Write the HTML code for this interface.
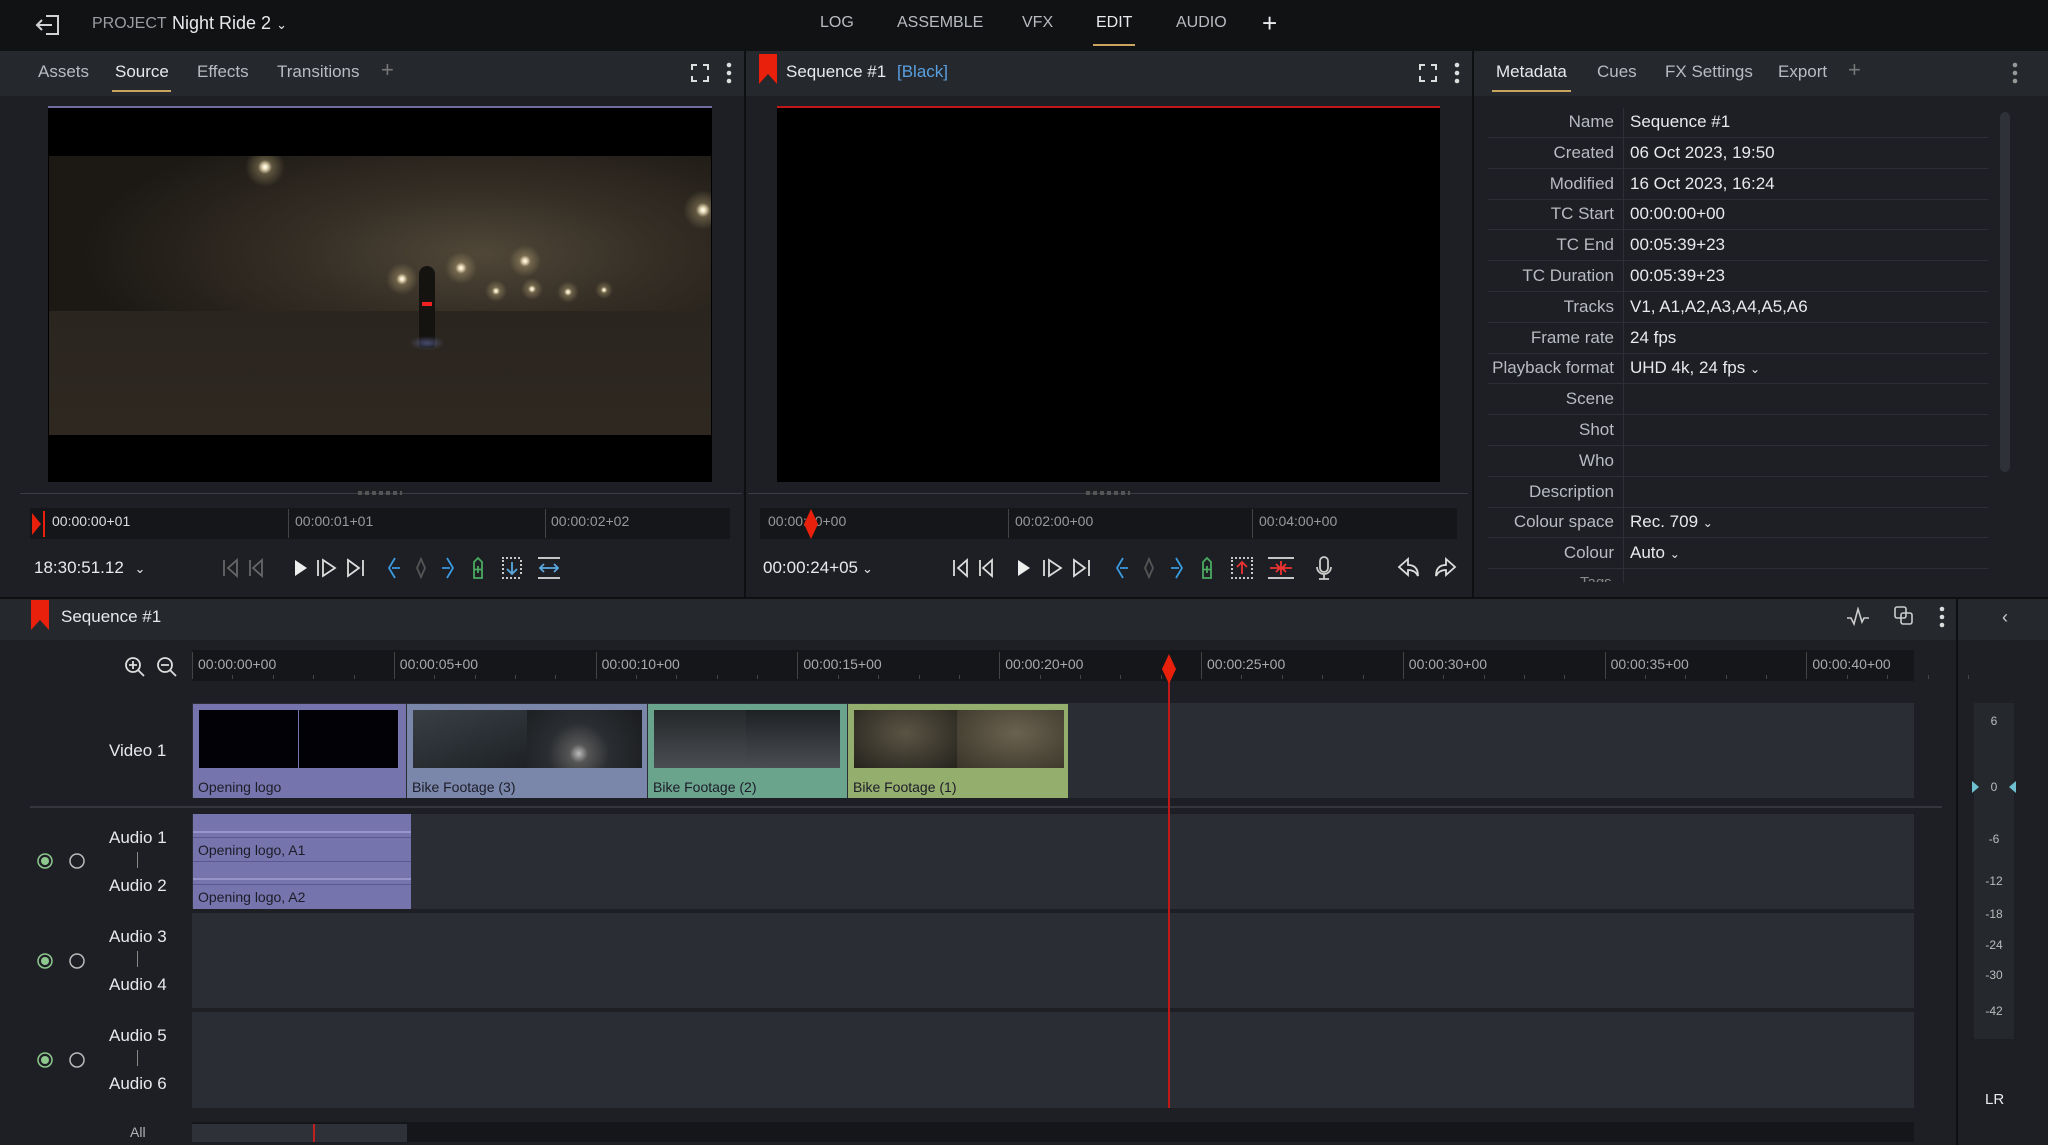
<!DOCTYPE html>
<html><head><meta charset="utf-8"><style>
*{box-sizing:border-box;margin:0;padding:0}
body{width:2048px;height:1145px;background:#1d1f24;font-family:"Liberation Sans",sans-serif;color:#c8cacf;position:relative;overflow:hidden;font-size:17px}
.a{position:absolute;white-space:nowrap}
.t{color:#b8bbc1}
.w{color:#e8e9ec}
.lbl{font-size:15px;color:#b0b3b8}
.ic{position:absolute}
.lt{position:absolute;border-radius:50%;background:radial-gradient(circle,#fff 0,#f0e4c0 8%,rgba(200,180,130,.35) 25%,rgba(120,105,80,0) 70%)}
</style></head><body>
<!-- top bar -->
<div class="a" style="left:0;top:0;width:2048px;height:51px;background:#111214"></div>
<svg class="ic" style="left:34px;top:14px" width="28" height="22" viewBox="0 0 28 22" fill="none" stroke="#d0d2d6" stroke-width="2"><path d="M12 2h12v18H12M18 11H3M8 6l-5 5 5 5"/></svg>
<div class="a t" style="left:92px;top:15px;font-size:16px;color:#9a9da3">PROJECT</div>
<div class="a w" style="left:172px;top:13px;font-size:18px">Night Ride 2 <span style="font-size:13px">&#8964;</span></div>
<div class="a t" style="left:820px;top:14px;font-size:16px">LOG</div>
<div class="a t" style="left:897px;top:14px;font-size:16px">ASSEMBLE</div>
<div class="a t" style="left:1022px;top:14px;font-size:16px">VFX</div>
<div class="a w" style="left:1096px;top:14px;font-size:16px">EDIT</div>
<div class="a" style="left:1093px;top:44px;width:42px;height:2px;background:#c9a560"></div>
<div class="a t" style="left:1176px;top:14px;font-size:16px">AUDIO</div>
<div class="a w" style="left:1262px;top:8px;font-size:26px;font-weight:300">+</div>

<!-- tab rows -->
<div class="a" style="left:0;top:51px;width:2048px;height:45px;background:#25282d"></div>
<div class="a" style="left:744px;top:51px;width:2px;height:546px;background:#0e0f11"></div>
<div class="a" style="left:1472px;top:51px;width:2px;height:546px;background:#0e0f11"></div>
<div class="a t" style="left:38px;top:62px">Assets</div>
<div class="a w" style="left:115px;top:62px">Source</div>
<div class="a" style="left:112px;top:90px;width:59px;height:2px;background:#c9a560"></div>
<div class="a t" style="left:197px;top:62px">Effects</div>
<div class="a t" style="left:277px;top:62px">Transitions</div>
<div class="a" style="left:381px;top:57px;font-size:22px;color:#777">+</div>
<svg class="ic" style="left:691px;top:64px" width="18" height="18" fill="none" stroke="#ddd" stroke-width="2"><path d="M1 6V1h5M12 1h5v5M17 12v5h-5M6 17H1v-5"/></svg>
<svg class="ic" style="left:725px;top:62px" width="8" height="22" fill="#ddd"><circle cx="4" cy="3" r="2.3"/><circle cx="4" cy="11" r="2.3"/><circle cx="4" cy="19" r="2.3"/></svg>
<svg class="ic" style="left:759px;top:54px" width="18" height="30"><path d="M0 0h18v30l-9-10-9 10z" fill="#e8200c"/></svg>
<div class="a w" style="left:786px;top:62px">Sequence #1</div>
<div class="a" style="left:897px;top:62px;color:#5aa0e0">[Black]</div>
<svg class="ic" style="left:1419px;top:64px" width="18" height="18" fill="none" stroke="#ddd" stroke-width="2"><path d="M1 6V1h5M12 1h5v5M17 12v5h-5M6 17H1v-5"/></svg>
<svg class="ic" style="left:1453px;top:62px" width="8" height="22" fill="#ddd"><circle cx="4" cy="3" r="2.3"/><circle cx="4" cy="11" r="2.3"/><circle cx="4" cy="19" r="2.3"/></svg>
<div class="a w" style="left:1496px;top:62px">Metadata</div>
<div class="a" style="left:1492px;top:90px;width:79px;height:2px;background:#c9a560"></div>
<div class="a t" style="left:1597px;top:62px">Cues</div>
<div class="a t" style="left:1665px;top:62px">FX Settings</div>
<div class="a t" style="left:1778px;top:62px">Export</div>
<div class="a" style="left:1848px;top:57px;font-size:22px;color:#777">+</div>
<svg class="ic" style="left:2011px;top:62px" width="8" height="22" fill="#999"><circle cx="4" cy="3" r="2.3"/><circle cx="4" cy="11" r="2.3"/><circle cx="4" cy="19" r="2.3"/></svg>

<!-- source viewer -->
<div class="a" style="left:48px;top:106px;width:664px;height:376px;background:#000;border-top:2px solid #6e6c9c"></div>
<div class="a" style="left:49px;top:156px;width:662px;height:279px;overflow:hidden;background:radial-gradient(ellipse 60% 50% at 65% 35%,#504738 0%,#352e25 45%,#1c1914 100%)">
 <div class="a" style="left:0;top:155px;width:662px;height:124px;background:linear-gradient(#2a251f,#2e2820)"></div>
 <div class="lt" style="left:196px;top:-9px;width:40px;height:40px"></div>
 <div class="lt" style="left:634px;top:34px;width:40px;height:40px"></div>
 <div class="lt" style="left:337px;top:107px;width:32px;height:32px"></div>
 <div class="lt" style="left:396px;top:96px;width:32px;height:32px"></div>
 <div class="lt" style="left:460px;top:89px;width:32px;height:32px"></div>
 <div class="lt" style="left:436px;top:124px;width:22px;height:22px"></div>
 <div class="lt" style="left:472px;top:122px;width:22px;height:22px"></div>
 <div class="lt" style="left:508px;top:125px;width:22px;height:22px"></div>
 <div class="lt" style="left:546px;top:125px;width:18px;height:18px"></div>
 <div class="a" style="left:370px;top:110px;width:16px;height:82px;border-radius:8px 8px 3px 3px;background:#151310"></div>
 <div class="a" style="left:373px;top:146px;width:10px;height:4px;background:#e22"></div>
 <div class="a" style="left:360px;top:180px;width:36px;height:14px;border-radius:50%;background:radial-gradient(rgba(120,130,200,.5),transparent 70%)"></div>
</div>
<!-- program viewer -->
<div class="a" style="left:777px;top:106px;width:663px;height:376px;background:#000;border-top:2px solid #c01818"></div>

<!-- dividers -->
<div class="a" style="left:20px;top:493px;width:722px;height:1px;background:#3a3d43"></div>
<div class="a" style="left:358px;top:491px;width:44px;height:4px;background:repeating-linear-gradient(90deg,#555 0 4px,transparent 4px 7px)"></div>
<div class="a" style="left:748px;top:493px;width:720px;height:1px;background:#3a3d43"></div>
<div class="a" style="left:1086px;top:491px;width:44px;height:4px;background:repeating-linear-gradient(90deg,#555 0 4px,transparent 4px 7px)"></div>

<!-- source ruler -->
<div class="a" style="left:30px;top:508px;width:700px;height:31px;background:#141619"></div>
<svg class="ic" style="left:30px;top:511px" width="16" height="26"><path d="M2 2l9 11-9 11z" fill="#e8200c"/><rect x="13" y="0" width="2" height="26" fill="#e8200c"/></svg>
<div class="a" style="left:52px;top:513px;font-size:14px;color:#ddd">00:00:00+01</div>
<div class="a" style="left:288px;top:509px;width:1px;height:29px;background:#444"></div>
<div class="a" style="left:295px;top:513px;font-size:14px;color:#999">00:00:01+01</div>
<div class="a" style="left:545px;top:509px;width:1px;height:29px;background:#444"></div>
<div class="a" style="left:551px;top:513px;font-size:14px;color:#999">00:00:02+02</div>
<!-- program ruler -->
<div class="a" style="left:760px;top:508px;width:697px;height:31px;background:#141619"></div>
<div class="a" style="left:768px;top:513px;font-size:14px;color:#999">00:00:00+00</div>
<svg class="ic" style="left:803px;top:509px" width="16" height="30"><path d="M8 0l7 15-7 15-7-15z" fill="#e8200c"/></svg>
<div class="a" style="left:1008px;top:509px;width:1px;height:29px;background:#444"></div>
<div class="a" style="left:1015px;top:513px;font-size:14px;color:#999">00:02:00+00</div>
<div class="a" style="left:1252px;top:509px;width:1px;height:29px;background:#444"></div>
<div class="a" style="left:1259px;top:513px;font-size:14px;color:#999">00:04:00+00</div>

<!-- source controls -->
<div class="a w" style="left:34px;top:558px;font-size:17px">18:30:51.12 <span style="font-size:13px;margin-left:6px">&#8964;</span></div>
<svg class="ic" style="left:222px;top:555px" width="350" height="26" fill="none" stroke-width="1.8">
 <g stroke="#666"><path d="M2 5v16M15 5l-9 8 9 8z"/><path d="M28 5v16M40 5l-9 8 9 8z"/></g>
 <path d="M73 5l12 8-12 8z" fill="#eee"/>
 <g stroke="#ddd"><path d="M96 5v16M101 5l12 8-12 8z"/><path d="M126 5l11 8-11 8zM141 5v16"/></g>
 <g stroke="#3a9ae0"><path d="M173 3l-6 10 6 10M170 13h8"/><path d="M225 3l6 10-6 10M220 13h8"/></g>
 <path d="M199 4l-4 9 4 9 4-9z" stroke="#555"/>
 <path d="M252 7l4-4 4 4v16h-8zM256 11v7M252.5 14.5h7" stroke="#4aaa60"/>
 <g stroke="#ddd"><path d="M280 3h20M280 23h20M281 5v16M299 5v16" stroke-dasharray="2 2"/><path d="M290 7v12M285 14l5 5 5-5" stroke="#5aa8e0"/></g>
 <g stroke="#ddd"><path d="M316 3h22M316 23h22"/><path d="M318 13h18M322 9l-4 4 4 4M332 9l4 4-4 4" stroke="#5aa8e0"/></g>
</svg>
<!-- program controls -->
<div class="a w" style="left:763px;top:558px;font-size:17px">00:00:24+05<span style="font-size:13px;margin-left:4px">&#8964;</span></div>
<svg class="ic" style="left:952px;top:555px" width="380" height="26" fill="none" stroke-width="1.8">
 <g stroke="#ddd"><path d="M2 5v16M15 5l-9 8 9 8z"/><path d="M28 5v16M40 5l-9 8 9 8z"/></g>
 <path d="M66 5l12 8-12 8z" fill="#eee"/>
 <g stroke="#ddd"><path d="M92 5v16M97 5l12 8-12 8z"/><path d="M122 5l11 8-11 8zM137 5v16"/></g>
 <g stroke="#3a9ae0"><path d="M171 3l-6 10 6 10M168 13h8"/><path d="M224 3l6 10-6 10M219 13h8"/></g>
 <path d="M197 4l-4 9 4 9 4-9z" stroke="#555"/>
 <path d="M251 7l4-4 4 4v16h-8zM255 11v7M251.5 14.5h7" stroke="#4aaa60"/>
 <g stroke="#ddd"><path d="M279 3h22M279 23h22M280 5v16M300 5v16" stroke-dasharray="2 2"/><path d="M290 19V7M285 12l5-5 5 5" stroke="#e33"/></g>
 <g stroke="#ddd"><path d="M316 3h26M316 23h26"/><path d="M318 13h22M324 9l4 4-4 4M334 9l-4 4 4 4M329 6v14" stroke="#e33"/></g>
 <path d="M372 2a4 4 0 0 1 4 4v7a4 4 0 0 1-8 0V6a4 4 0 0 1 4-4zM365 12a7 7 0 0 0 14 0M372 19v5M367 24h10" stroke="#ccc"/>
</svg>
<svg class="ic" style="left:1397px;top:555px" width="60" height="26" fill="none" stroke="#ddd" stroke-width="1.8"><path d="M11 4L2 12l9 8v-5c5 0 8 2 10 6 0-7-3-11-10-11zM49 4l9 8-9 8v-5c-5 0-8 2-10 6 0-7 3-11 10-11z"/></svg>

<!-- metadata -->
<div class="a" style="left:1623px;top:108px;width:1px;height:475px;background:#2c2f35"></div>
<div id="md"></div>
<div class="a" style="left:2000px;top:112px;width:10px;height:360px;border-radius:5px;background:#2e3137"></div>

<!-- timeline header -->
<div class="a" style="left:0;top:597px;width:2048px;height:43px;background:#25282d;border-top:2px solid #0e0f11"></div>
<svg class="ic" style="left:31px;top:600px" width="18" height="30"><path d="M0 0h18v30l-9-10-9 10z" fill="#e8200c"/></svg>
<div class="a w" style="left:61px;top:607px">Sequence #1</div>
<svg class="ic" style="left:1846px;top:607px" width="24" height="20" fill="none" stroke="#ccc" stroke-width="1.6"><path d="M1 11h4l3 6 4-15 4 13 2-4h5"/></svg>
<svg class="ic" style="left:1894px;top:606px" width="20" height="20" fill="none" stroke="#ccc" stroke-width="1.6"><rect x="1" y="1" width="11" height="11" rx="2"/><rect x="7" y="7" width="11" height="11" rx="2"/></svg>
<svg class="ic" style="left:1938px;top:606px" width="8" height="22" fill="#ddd"><circle cx="4" cy="3" r="2.3"/><circle cx="4" cy="11" r="2.3"/><circle cx="4" cy="19" r="2.3"/></svg>
<div class="a" style="left:1956px;top:597px;width:2px;height:548px;background:#0e0f11"></div>
<div class="a" style="left:2002px;top:607px;color:#ccc;font-size:18px">&lsaquo;</div>

<!-- zoom icons -->
<svg class="ic" style="left:124px;top:656px" width="60" height="22" fill="none" stroke="#ddd" stroke-width="1.8"><circle cx="9" cy="9" r="7"/><path d="M14 14l6 6M5 9h8M9 5v8"/><circle cx="41" cy="9" r="7"/><path d="M46 14l6 6M37 9h8"/></svg>
<!-- timeline ruler -->
<div class="a" style="left:192px;top:650px;width:1722px;height:31px;background:#141619"></div>
<div id="tr"></div>
<!-- tracks -->
<div class="a" style="left:192px;top:703px;width:1722px;height:95px;background:#2a2d34"></div>
<div class="a" style="left:30px;top:806px;width:1912px;height:2px;background:#33363c"></div>
<div class="a" style="left:192px;top:814px;width:1722px;height:95px;background:#2a2d34"></div>
<div class="a" style="left:192px;top:913px;width:1722px;height:95px;background:#2a2d34"></div>
<div class="a" style="left:192px;top:1012px;width:1722px;height:96px;background:#2a2d34"></div>
<div class="a" style="left:192px;top:1122px;width:1722px;height:20px;background:#141619"></div>
<div class="a" style="left:192px;top:1124px;width:215px;height:18px;background:#2e3137"></div>
<div class="a" style="left:313px;top:1124px;width:2px;height:18px;background:#c02020"></div>
<div class="a lbl" style="left:130px;top:1124px;font-size:14px">All</div>

<div class="a w" style="left:109px;top:741px">Video 1</div>
<div class="a w" style="left:109px;top:828px">Audio 1</div>
<div class="a" style="left:137px;top:852px;width:1px;height:16px;background:#888"></div>
<div class="a w" style="left:109px;top:876px">Audio 2</div>
<div class="a w" style="left:109px;top:927px">Audio 3</div>
<div class="a" style="left:137px;top:951px;width:1px;height:16px;background:#888"></div>
<div class="a w" style="left:109px;top:975px">Audio 4</div>
<div class="a w" style="left:109px;top:1026px">Audio 5</div>
<div class="a" style="left:137px;top:1050px;width:1px;height:16px;background:#888"></div>
<div class="a w" style="left:109px;top:1074px">Audio 6</div>
<svg class="ic" style="left:36px;top:852px" width="52" height="18" fill="none" stroke-width="1.5"><circle cx="9" cy="9" r="7" stroke="#8fc88f"/><circle cx="9" cy="9" r="4" fill="#8fc88f"/><circle cx="41" cy="9" r="7" stroke="#bbb"/></svg>
<svg class="ic" style="left:36px;top:952px" width="52" height="18" fill="none" stroke-width="1.5"><circle cx="9" cy="9" r="7" stroke="#8fc88f"/><circle cx="9" cy="9" r="4" fill="#8fc88f"/><circle cx="41" cy="9" r="7" stroke="#bbb"/></svg>
<svg class="ic" style="left:36px;top:1051px" width="52" height="18" fill="none" stroke-width="1.5"><circle cx="9" cy="9" r="7" stroke="#8fc88f"/><circle cx="9" cy="9" r="4" fill="#8fc88f"/><circle cx="41" cy="9" r="7" stroke="#bbb"/></svg>

<!-- video clips -->
<div class="a" style="left:193px;top:704px;width:213px;height:94px;background:#7674ac">
 <div class="a" style="left:6px;top:6px;width:99px;height:58px;background:#020206"></div>
 <div class="a" style="left:106px;top:6px;width:99px;height:58px;background:#020206"></div>
 <div class="a" style="left:5px;top:75px;font-size:14px;color:#1c1c28">Opening logo</div>
</div>
<div class="a" style="left:407px;top:704px;width:240px;height:94px;background:#7a87aa">
 <div class="a" style="left:6px;top:6px;width:114px;height:58px;background:linear-gradient(160deg,#3a3f45,#1e2226)"></div>
 <div class="a" style="left:120px;top:6px;width:115px;height:58px;background:radial-gradient(circle at 45% 75%,#bbb 0,#555 12%,#2a2d31 40%,#1a1c1f)"></div>
 <div class="a" style="left:5px;top:75px;font-size:14px;color:#1c1c28">Bike Footage (3)</div>
</div>
<div class="a" style="left:648px;top:704px;width:199px;height:94px;background:#6aa48c">
 <div class="a" style="left:6px;top:6px;width:92px;height:58px;background:linear-gradient(#25282a,#4a4d52)"></div>
 <div class="a" style="left:98px;top:6px;width:94px;height:58px;background:linear-gradient(#1e2124,#4a4d52)"></div>
 <div class="a" style="left:5px;top:75px;font-size:14px;color:#1c1c28">Bike Footage (2)</div>
</div>
<div class="a" style="left:848px;top:704px;width:220px;height:94px;background:#94ae6e">
 <div class="a" style="left:6px;top:6px;width:103px;height:58px;background:radial-gradient(ellipse at 50% 40%,#5a5444,#25231d)"></div>
 <div class="a" style="left:109px;top:6px;width:107px;height:58px;background:radial-gradient(ellipse at 55% 40%,#6a6250,#3a3529)"></div>
 <div class="a" style="left:5px;top:75px;font-size:14px;color:#1c1c28">Bike Footage (1)</div>
</div>
<!-- audio clip -->
<div class="a" style="left:193px;top:814px;width:218px;height:95px;background:#7674ac">
 <div class="a" style="left:0;top:17px;width:218px;height:2px;background:#9694c8"></div>
 <div class="a" style="left:0;top:23px;width:218px;height:1px;background:#5a5890"></div>
 <div class="a" style="left:5px;top:28px;font-size:14px;color:#1c1c28">Opening logo, A1</div>
 <div class="a" style="left:0;top:47px;width:218px;height:1px;background:#5a5890"></div>
 <div class="a" style="left:0;top:64px;width:218px;height:2px;background:#9694c8"></div>
 <div class="a" style="left:0;top:70px;width:218px;height:1px;background:#5a5890"></div>
 <div class="a" style="left:5px;top:75px;font-size:14px;color:#1c1c28">Opening logo, A2</div>
</div>
<!-- playhead -->
<div class="a" style="left:1168px;top:660px;width:2px;height:448px;background:#c01818"></div>
<svg class="ic" style="left:1161px;top:654px" width="16" height="30"><path d="M8 0l7 15-7 15-7-15z" fill="#e8200c"/></svg>

<!-- meter -->
<div class="a" style="left:1974px;top:703px;width:40px;height:336px;background:#25282d"></div>
<div id="mt"></div>
<div class="a w" style="left:1985px;top:1091px;font-size:15px">LR</div>

<script>
var md=[["Name","Sequence #1"],["Created","06 Oct 2023, 19:50"],["Modified","16 Oct 2023, 16:24"],["TC Start","00:00:00+00"],["TC End","00:05:39+23"],["TC Duration","00:05:39+23"],["Tracks","V1, A1,A2,A3,A4,A5,A6"],["Frame rate","24 fps"],["Playback format","UHD 4k, 24 fps <span style='font-size:12px'>&#8964;</span>"],["Scene",""],["Shot",""],["Who",""],["Description",""],["Colour space","Rec. 709 <span style='font-size:12px'>&#8964;</span>"],["Colour","Auto <span style='font-size:12px'>&#8964;</span>"]];
var h="";md.forEach(function(r,i){var y=112+i*30.8;
h+='<div class="a" style="left:1476px;top:'+(y)+'px;width:138px;text-align:right;color:#b8bbc1">'+r[0]+'</div>';
h+='<div class="a" style="left:1630px;top:'+(y)+'px;color:#e8e9ec">'+r[1]+'</div>';
h+='<div class="a" style="left:1488px;top:'+(y+25)+'px;width:500px;height:1px;background:#2c2f35"></div>';});
h+='<div class="a" style="left:1580px;top:574px;width:34px;height:8px;overflow:hidden;color:#888;font-size:15px">Tags</div>';
document.getElementById("md").innerHTML=h;
var tl="";for(var i=0;i<9;i++){var x=192+i*201.8;
tl+='<div class="a" style="left:'+x+'px;top:652px;width:1px;height:27px;background:#444"></div><div class="a" style="left:'+(x+6)+'px;top:656px;font-size:14px;color:#aaa">00:00:'+("0"+i*5).slice(-2)+'+00</div>';
for(var k=1;k<5;k++)tl+='<div class="a" style="left:'+(x+k*40.4)+'px;top:675px;width:1px;height:4px;background:#444"></div>';}
document.getElementById("tr").innerHTML=tl;
var m=[["6",714],["0",780],["-6",832],["-12",874],["-18",907],["-24",938],["-30",968],["-42",1004]],mh="";
m.forEach(function(r){mh+='<div class="a" style="left:1974px;top:'+r[1]+'px;width:40px;text-align:center;font-size:12px;color:#bbb">'+r[0]+'</div>';});
mh+='<svg class="ic" style="left:1972px;top:779px" width="44" height="16"><path d="M0 2l7 6-7 6z" fill="#6ec0d0"/><path d="M44 2l-7 6 7 6z" fill="#6ec0d0"/></svg>';
document.getElementById("mt").innerHTML=mh;
</script>
</body></html>
